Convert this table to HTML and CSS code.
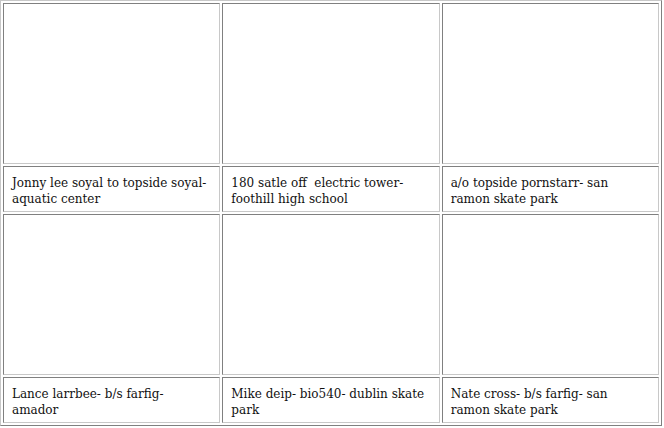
FILE: index.html
```html
<!DOCTYPE html>
<html lang="en">
<head>
    <meta charset="UTF-8">
    <title>Photos</title>
    <link rel="stylesheet" href="styles.css">
</head>
<body>
    <table class="photos">
        <tr class="pic-row">
            <td></td>
            <td></td>
            <td></td>
        </tr>
        <tr class="caption-row">
            <td>Jonny lee soyal to topside soyal-aquatic center</td>
            <td>180 satle off&nbsp; electric tower- foothill high school</td>
            <td>a/o topside pornstarr- san ramon skate park</td>
        </tr>
        <tr class="pic-row">
            <td></td>
            <td></td>
            <td></td>
        </tr>
        <tr class="caption-row">
            <td>Lance larrbee- b/s farfig- amador</td>
            <td>Mike deip- bio540- dublin skate park</td>
            <td>Nate cross- b/s farfig- san ramon skate park</td>
        </tr>
    </table>
</body>
</html>
```

FILE: styles.css
```css
body {
    margin: 0;
    background: #fff;
    font-family: "DejaVu Serif", serif;
}
.photos {
    width: 662px;
    border-spacing: 2px;
    border: 1px solid;
    border-color: #c8c8c8 #808080 #808080 #c8c8c8;
    table-layout: fixed;
}
.photos td {
    border: 1px solid;
    border-color: #808080 #c8c8c8 #c8c8c8 #808080;
    vertical-align: top;
}
.pic-row td {
    height: 159px;
    padding: 0;
}
.caption-row td {
    height: 31px;
    padding: 8px 8px 4px 8px;
    font-size: 12px;
    line-height: 16px;
    color: #111;
}
```
